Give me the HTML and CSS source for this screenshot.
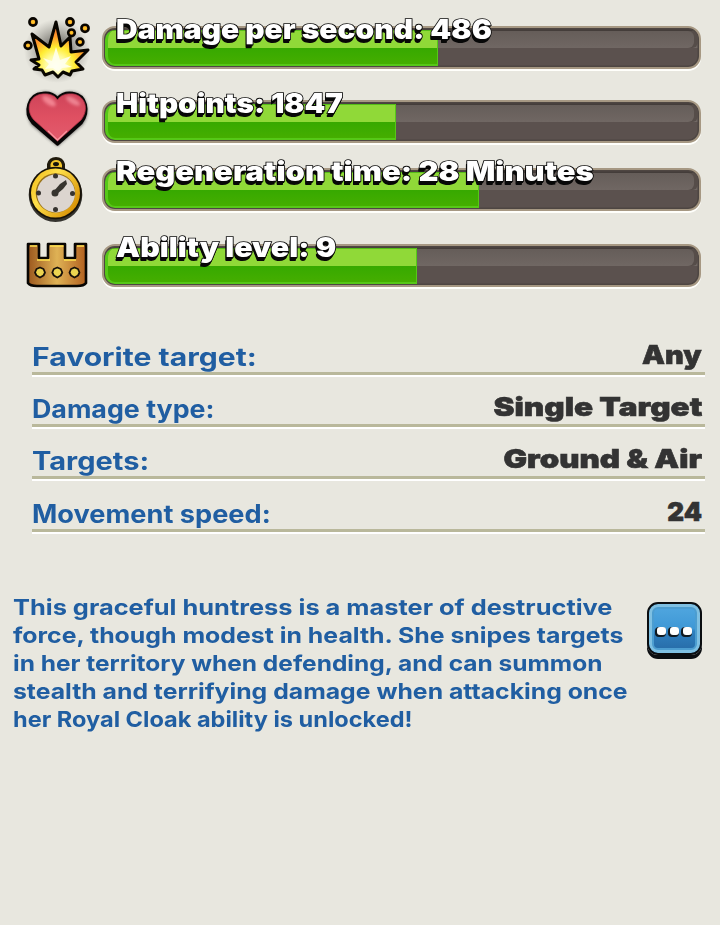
FILE: index.html
```html
<!DOCTYPE html>
<html lang="en">
<head>
<meta charset="utf-8">
<title>Hero info</title>
<link rel="stylesheet" href="styles.css">
</head>
<body>
<main class="panel">
  <section class="stats">
    <div class="stat stat-damage">
      <svg class="icon" viewBox="0 0 85 76" width="85" height="76" aria-hidden="true">
        <defs>
          <radialGradient id="burst" gradientUnits="userSpaceOnUse" cx="41" cy="58" r="42">
            <stop offset="0" stop-color="#fffff0"/><stop offset=".25" stop-color="#fffb9c"/><stop offset=".45" stop-color="#ffec31"/><stop offset=".7" stop-color="#ff9b2c"/><stop offset="1" stop-color="#ef6024"/>
          </radialGradient>
          <radialGradient id="spark"><stop offset="0" stop-color="#ffd52a"/><stop offset="1" stop-color="#f58a22"/></radialGradient>
          <radialGradient id="smoke"><stop offset=".3" stop-color="#55534e" stop-opacity=".75"/><stop offset="1" stop-color="#77756e" stop-opacity="0"/></radialGradient>
        </defs>
        <ellipse cx="42" cy="43" rx="33" ry="32" fill="url(#smoke)"/>
        <path d="M17 26 L34 39 L41 14 L46 38 L55 29 L56 44 L73 42 L61 54 L68 61 L57 63 L55 67 L48 64 L43 69 L38 64 L30 67 L27 62 L19 61 L24 57 L16 52 L24 51 Z" fill="url(#burst)" stroke="#080500" stroke-width="3" stroke-linejoin="round"/>
        <path d="M28 50 L37 53 L41 39 L45 52 L56 48 L50 56 L57 59 L47 60 L43 64 L38 60 L30 61 L34 56Z" fill="#fffff2" opacity=".85"/>
        <g fill="url(#spark)" stroke="#080500" stroke-width="2.6"><circle cx="18" cy="14" r="3.6"/><circle cx="55" cy="14" r="3.6"/><circle cx="70" cy="20.300" r="3.600"/><circle cx="56.500" cy="24.800" r="3.300"/><circle cx="65" cy="34" r="3.400"/><circle cx="13" cy="37.500" r="3.400"/></g>
      </svg>
      <div class="bar"><div class="fill"></div><div class="title">Damage per second: 486</div></div>
    </div>
    <div class="stat stat-health">
      <svg class="icon" viewBox="0 0 85 70" width="85" height="70" aria-hidden="true">
        <defs>
          <linearGradient id="heart" x2="0" y2="1"><stop offset="0" stop-color="#cf4459"/><stop offset=".5" stop-color="#df5062"/><stop offset="1" stop-color="#e35c6d"/></linearGradient>
          <filter id="soft" x="-50%" y="-50%" width="200%" height="200%"><feGaussianBlur stdDeviation="1.600"/></filter>
        </defs>
        <path d="M42.500 61 L17 40 C10 28 13 12 27 9 C35 8 39 10 42.500 14 C47 9 52 8 59 9 C72 12 75 28 67 40Z" fill="#080606" stroke="#333" stroke-width="2" opacity=".65" filter="url(#soft)"/>
        <path d="M42.500 60.500 L17.500 39 C8 28 13 10 27.500 9 C35 8 39 10 42.500 14 C47 9 52 8 58 9 C72 11 75 28 66.500 39Z" fill="#080606" stroke="#080606" stroke-width="2.500" stroke-linejoin="round"/>
        <path d="M42.500 57 L19 36 C10 26 14 11 28 10 C36 9.500 40 12 42.500 16 C46 10.500 52 9.500 58 10 C71 12 74 26 66 36Z" fill="url(#heart)" stroke="#b93349" stroke-width=".800"/>
        <ellipse cx="34" cy="17" rx="8" ry="3.500" transform="rotate(35 34 17)" fill="#ff9ca7" opacity=".7" filter="url(#soft)"/>
        <ellipse cx="58" cy="17" rx="8" ry="3" transform="rotate(30 58 17)" fill="#ffacb5" opacity=".6" filter="url(#soft)"/>
        <path d="M33 47 L42.500 56 L52 47" fill="none" stroke="#ffabb2" stroke-width="1.300" opacity=".75"/>
      </svg>
      <div class="bar"><div class="fill"></div><div class="title">Hitpoints: 1847</div></div>
    </div>
    <div class="stat stat-regen">
      <svg class="icon" viewBox="0 0 85 75" width="85" height="75" aria-hidden="true">
        <defs><linearGradient id="gold" x1="0" x2="1" y2=".7"><stop offset="0" stop-color="#edb514"/><stop offset=".4" stop-color="#ffe04a"/><stop offset="1" stop-color="#d79106"/></linearGradient></defs>
        <ellipse cx="40.500" cy="43" rx="26.800" ry="27" fill="#35342f"/>
        <path d="M32 19 V12 Q34 5 41 5 Q48 5 50 12 V19Z" fill="#211b0c"/>
        <path d="M35.500 18 V12 Q37 8 41 8 Q46 8 47 13 V18Z" fill="#f3c52b"/>
        <ellipse cx="41" cy="12" rx="3" ry="2" fill="#15130d"/>
        <circle cx="40.500" cy="41" r="26.300" fill="#171208"/>
        <circle cx="40.500" cy="41" r="24.500" fill="url(#gold)"/>
        <circle cx="40.500" cy="41" r="19.800" fill="#99721b"/>
        <circle cx="41" cy="41.500" r="19" fill="#dcd5cf"/>
        <g fill="#37342f"><circle cx="40.500" cy="24" r="2.500"/><circle cx="23.500" cy="41" r="2.500"/><circle cx="57.500" cy="41.500" r="2.500"/><circle cx="40.500" cy="57.500" r="2.500"/><circle cx="40" cy="41" r="3.500"/><path d="M39 39 L45 32 L51 28 L52 32 L48 37 L42 42Z"/></g>
      </svg>
      <div class="bar"><div class="fill"></div><div class="title">Regeneration time: 28 Minutes</div></div>
    </div>
    <div class="stat stat-ability">
      <svg class="icon" viewBox="0 0 85 65" width="85" height="65" aria-hidden="true">
        <defs><linearGradient id="bronze"><stop offset="0" stop-color="#9c581e"/><stop offset=".5" stop-color="#dfb255"/><stop offset="1" stop-color="#b2601f"/></linearGradient></defs>
        <path d="M13 12 H24 V26 H33 V12 H50 V26 H60 V12 H71 V51 Q69 54 62 54 H22 Q15 54 13 51Z" fill="url(#bronze)" stroke="#080603" stroke-width="2.600" stroke-linejoin="round"/>
        <path d="M15 14 H22 M35 14 H48.500 M62 14 H69 M22 28 H35 M49 28 H61" fill="none" stroke="#ffe452" stroke-width="1.500"/>
        <g fill="#ecd450" stroke="#171009" stroke-width="1.800" stroke-linejoin="round"><path id="stud" d="M25 35.500 L28.500 37 L30 40.500 L28.500 43.500 L25 45.500 L21.500 43.500 L20 40.500 L21.500 37Z"/><use href="#stud" x="17.300"/><use href="#stud" x="34.500"/></g>
      </svg>
      <div class="bar"><div class="fill"></div><div class="title">Ability level: 9</div></div>
    </div>
  </section>

  <dl class="facts">
    <div class="fact"><dt class="favorite">Favorite target:</dt><dd class="any">Any</dd></div>
    <div class="fact"><dt class="type">Damage type:</dt><dd class="single">Single Target</dd></div>
    <div class="fact"><dt class="targets">Targets:</dt><dd class="ground">Ground &amp; Air</dd></div>
    <div class="fact"><dt class="speed">Movement speed:</dt><dd class="number">24</dd></div>
  </dl>

  <section class="about">
    <p class="description">
      <span class="line line-1">This graceful huntress is a master of destructive</span>
      <span class="line line-2">force, though modest in health. She snipes targets</span>
      <span class="line line-3">in her territory when defending, and can summon</span>
      <span class="line line-4">stealth and terrifying damage when attacking once</span>
      <span class="line line-5">her Royal Cloak ability is unlocked!</span>
    </p>
    <button class="more" aria-label="More"><span class="dot"></span><span class="dot"></span><span class="dot"></span></button>
  </section>
</main>
</body>
</html>
```

FILE: styles.css
```css
* { box-sizing: border-box; }
body {
  margin: 0;
  background: #e8e7df;
  font-family: Inter, "Open Sans", sans-serif;
}
.panel { width: 720px; height: 925px; overflow: hidden; }
.stats { padding: 8px 0 0 15px; height: 340px; }
.stat { display: flex; }
.stat-damage { height: 76px; }
.stat-health { height: 68px; }
.stat-regen { height: 80px; }
.stat-ability { height: 65px; }
.icon { flex: none; display: block; }
.bar {
  position: relative;
  flex: none;
  width: 599px;
  height: 43px;
  margin: 18px 0 0 2px;
  padding: 2px 1px 1px 1px;
  border: 2px solid #a69883;
  border-radius: 13px;
  background: linear-gradient(#443d3a 0 3px, #655d59 3px, #706763 20px, #5b514e 20px, #5b514e 100%);
  box-shadow: 0 2px 0 #fffffb, inset 0 0 0 1.5px #4e4642;
}
.stat-health .bar { margin-top: 16px; }
.stat-regen .bar { margin-top: 16px; }
.stat-ability .bar { margin-top: 12px; }
.bar::after {
  content: "";
  position: absolute;
  right: 5px;
  top: 3px;
  width: 30px;
  height: 17px;
  border-radius: 0 6px 6px 0;
  box-shadow: 4px 0 0 #564d49;
}
.fill {
  height: 36px;
  border-radius: 10px 0 0 10px;
  border: solid #56c817;
  border-width: 0 1px 2px 3px;
  background: linear-gradient(#55bd17 0 1px, #90d938 1px 18px, #37a900 18px, #45ae00 100%);
}
.stat-damage .fill { width: 333px; }
.stat-health .fill { width: 291px; }
.stat-regen .fill { width: 374px; }
.stat-ability .fill { width: 312px; }
.title {
  position: absolute;
  left: 12px;
  top: -14px;
  color: #fff;
  font-size: 27px;
  line-height: 32px;
  font-weight: 900;
  white-space: nowrap;
  transform-origin: left;
  -webkit-text-stroke: 1.6px #080808;
  paint-order: stroke fill;
  text-shadow: 0 1px 0 #080808, 0 2px 0 #080808, -1px 3px 0 #080808, -1px 4px 0 #080808;
}
.stat-damage .title { transform: scaleX(1.11); }
.stat-health .title { transform: scaleX(1.1); }
.stat-regen .title { transform: scaleX(1.147); }
.stat-ability .title { transform: scaleX(1.127); }
.facts { margin: 0; padding: 0 15px 0 32px; height: 252px; }
.fact {
  display: flex;
  align-items: flex-end;
  justify-content: space-between;
  height: 52.200px;
  padding-right: 3px;
  border-bottom: 3px solid #b9b89b;
  box-shadow: 0 2px 0 #fff;
}
.fact:first-child { height: 35px; }
dt, dd { margin: 0; white-space: nowrap; line-height: 30px; }
dt { color: #205ea2; font-size: 25px; font-weight: 700; transform-origin: left; }
dd { color: #333; font-size: 26px; font-weight: 900; margin-bottom: 2px; -webkit-text-stroke: .6px #333; transform-origin: right; }
.favorite { transform: scaleX(1.204); }
.type { transform: scaleX(1.072); }
.targets { transform: scaleX(1.16); }
.speed { transform: scaleX(1.087); }
.any { transform: scaleX(1.11); }
.single { transform: scaleX(1.212); }
.ground { transform: scaleX(1.203); }
.about { display: flex; justify-content: space-between; padding: 2px 18px 0 13px; }
.description { margin: -1px 0 0; color: #205ea2; font-size: 22px; line-height: 28px; font-weight: 700; }
.line { display: block; width: max-content; white-space: nowrap; transform-origin: left; }
.line-1 { transform: scaleX(1.154); }
.line-2 { transform: scaleX(1.13); }
.line-3 { transform: scaleX(1.113); }
.line-4 { transform: scaleX(1.126); }
.line-5 { transform: scaleX(1.07); }
.more {
  display: flex;
  flex: none;
  align-items: center;
  justify-content: center;
  gap: 4px;
  width: 55px;
  height: 53px;
  margin: 8px 0 0;
  padding: 5px 0 0;
  border: 2px solid #0a0d10;
  border-radius: 11px;
  background: linear-gradient(#52a8e0, #3f98d6 50%, #2f80bf 56%, #2669a5);
  box-shadow: inset 0 0 0 3px #7fc0e2, inset 0 0 0 5px #4c9dd0, 0 4px 0 #0a0d10;
}
.dot {
  width: 9px;
  height: 8px;
  border-radius: 3px;
  background: #fff;
  box-shadow: -1px 1px 0 1px #101920;
}
```
